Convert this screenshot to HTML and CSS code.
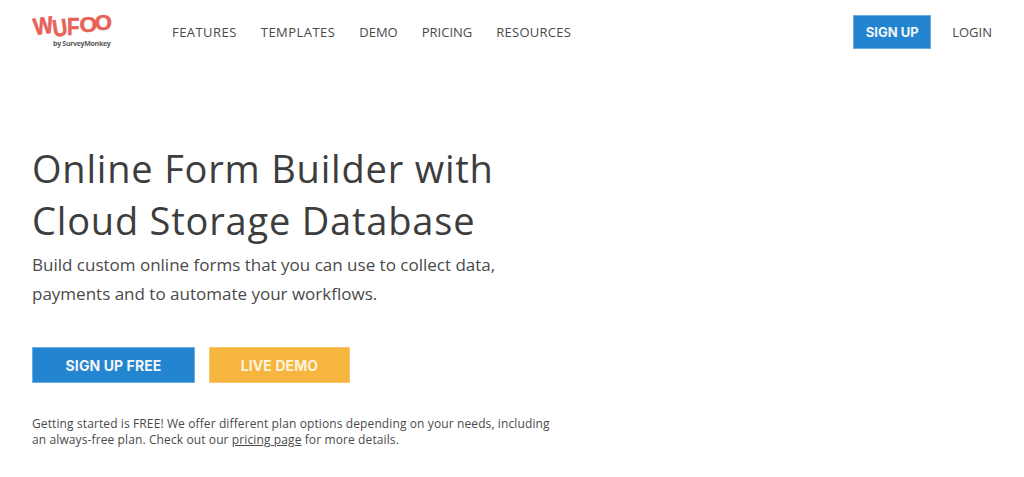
FILE: index.html
```
<!DOCTYPE html>
<html lang="en">
<head>
<meta charset="utf-8">
<title>Wufoo</title>
<link rel="stylesheet" href="styles.css">
</head>
<body>
<header class="topbar">
  <a class="logo" href="#">
    <span class="logo-word"><span class="l l1">W</span><span class="l l2">U</span><span class="l l3">F</span><span class="l l4">O</span><span class="l l5">O</span></span>
    <span class="logo-by">by SurveyMonkey</span>
  </a>
  <nav class="nav">
    <a href="#">FEATURES</a>
    <a href="#">TEMPLATES</a>
    <a class="tight" href="#">DEMO</a>
    <a class="tight" href="#">PRICING</a>
    <a class="snug" href="#">RESOURCES</a>
  </nav>
  <div class="auth">
    <a class="btn btn-blue btn-small" href="#">SIGN UP</a>
    <a class="login" href="#">LOGIN</a>
  </div>
</header>
<main class="hero">
  <h1>Online Form Builder with<br>Cloud Storage Database</h1>
  <p class="lead">Build custom online forms that you can use to collect data,<br>payments and to automate your workflows.</p>
  <div class="cta">
    <a class="btn btn-blue btn-large" href="#">SIGN UP FREE</a>
    <a class="btn btn-yellow btn-large" href="#">LIVE DEMO</a>
  </div>
  <p class="note">Getting started is FREE! We offer different plan options depending on your needs, including<br>an always-free plan. Check out our <a href="#">pricing page</a> for more details.</p>
</main>
</body>
</html>
```
FILE: styles.css
```
* { box-sizing: border-box; }
html, body { margin: 0; padding: 0; }
body {
  background: #fff;
  color: #3d3d3d;
  font-family: "Open Sans", "Liberation Sans", sans-serif;
  height: 477px;
  overflow: hidden;
}
a { color: inherit; text-decoration: none; }
.topbar {
  display: flex;
  align-items: center;
  height: 64px;
  padding: 0 32px;
}
.logo {
  display: flex;
  flex-direction: column;
  width: 140px;
  height: 40px;
  padding-top: 1px;
}
.logo-word {
  display: flex;
  height: 26px;
  color: #e8625a;
  font-family: "Liberation Sans", sans-serif;
  font-weight: 700;
  font-size: 24px;
  line-height: 26px;
  -webkit-text-stroke: 0.6px #e8625a;
}
.l { display: inline-block; }
.l1 { transform: rotate(-8deg) scaleX(.88); margin-right: -4px; }
.l2 { transform: rotate(-8deg) translateY(2px) scaleX(.85); margin-right: -2px; }
.l3 { transform: translateY(1px) scaleX(.85); margin-right: -2px; }
.l4 { transform: translateY(-2px) scale(.95); margin-right: -2px; }
.l5 { transform: translateY(-3px) scale(.92); margin-left: -1px; }
.logo-by {
  margin-left: 21px;
  font-size: 7px;
  line-height: 9px;
  font-weight: 700;
  letter-spacing: -.3px;
  color: #5a5a5a;
}
.nav {
  display: flex;
  gap: 24px;
  font-size: 13px;
  letter-spacing: .45px;
  color: #4a4a4a;
}
.nav .tight { letter-spacing: 0; }
.nav .snug { letter-spacing: .25px; }
.auth {
  margin-left: auto;
  display: flex;
  align-items: center;
  gap: 21px;
}
.login { font-size: 13px; color: #4a4a4a; }
.btn {
  display: flex;
  align-items: center;
  justify-content: center;
  font-family: "Inter", "Liberation Sans", sans-serif;
  font-weight: 700;
  color: #f2f6fa;
}
.btn-blue { background: #2384cf; border: 1px solid #6bb0e4; }
.btn-yellow { background: #f6b53f; border: 1px solid #f9c66c; color: #fdf3dd; }
.btn-small { width: 78px; height: 34px; font-size: 13px; }
.btn-large { height: 36px; font-size: 14px; letter-spacing: .1px; }
.hero { padding: 78px 32px 0; }
h1 {
  margin: 0;
  font-weight: 400;
  font-size: 38px;
  line-height: 52px;
  letter-spacing: .8px;
  color: #3d3d3d;
}
.lead {
  margin: 4px 0 0;
  font-size: 17px;
  line-height: 29px;
  color: #4a4a4a;
}
.cta {
  display: flex;
  gap: 14px;
  margin-top: 39px;
}
.cta .btn-blue { width: 163px; }
.cta .btn-yellow { width: 141px; }
.note {
  margin: 33px 0 0;
  font-size: 12px;
  line-height: 16px;
  letter-spacing: .11px;
  color: #4a4a4a;
}
.note a { text-decoration: underline; }
```
